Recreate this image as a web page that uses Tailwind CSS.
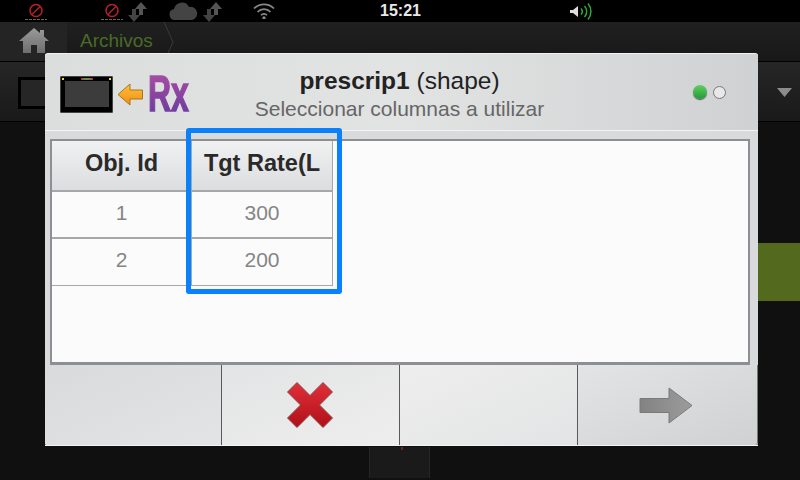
<!DOCTYPE html>
<html lang="en">
<head>
  <meta charset="UTF-8" />
  <title>Archivos</title>
  <script src="https://cdn.jsdelivr.net/npm/@tailwindcss/browser@4"></script>
</head>
<body class="relative w-[800px] h-[480px] overflow-hidden bg-[#101010] font-['Liberation_Sans',sans-serif]">

  <!-- Status bar -->
  <div class="relative h-[22px] bg-black">
    <svg class="absolute left-[24px] top-[2px]" width="24" height="19" viewBox="0 0 24 19" fill="none"><circle cx="12" cy="8.500" r="6" stroke="#b8202a" stroke-width="1.500"/><path d="M8 12.500l8-8" stroke="#b8202a" stroke-width="1.500"/><path d="M1 17.500h22" stroke="#666" stroke-dasharray="3 1"/></svg>
    <svg class="absolute left-[100px] top-[2px]" width="24" height="19" viewBox="0 0 24 19" fill="none"><circle cx="12" cy="8.500" r="6" stroke="#b8202a" stroke-width="1.500"/><path d="M8 12.500l8-8" stroke="#b8202a" stroke-width="1.500"/><path d="M1 17.500h22" stroke="#666" stroke-dasharray="3 1"/></svg>
    <svg class="absolute left-[127px] top-[2px]" width="21" height="20" viewBox="0 0 21 20" fill="#555"><path d="M14 0l6 7h-4v6h-4V7H8z"/><path d="M7 20l-6-7h4V7h4v6h4z" fill="#444"/></svg>
    <svg class="absolute left-[169px] top-[2px]" width="30" height="18" viewBox="0 0 30 18" fill="#444"><path d="M6 18a5.500 5.500 0 0 1-1-10.900A8 8 0 0 1 20 5a6.500 6.500 0 0 1 3 13z"/></svg>
    <svg class="absolute left-[202px] top-[2px]" width="21" height="20" viewBox="0 0 21 20" fill="#555"><path d="M14 0l6 7h-4v6h-4V7H8z"/><path d="M7 20l-6-7h4V7h4v6h4z" fill="#444"/></svg>
    <svg class="absolute left-[253px] top-[3px]" width="22" height="16" viewBox="0 0 22 16" fill="none" stroke="#888" stroke-width="1.700"><path d="M1 5.500a14 14 0 0 1 20 0"/><path d="M4.500 9a9 9 0 0 1 13 0"/><path d="M8 12.300a4 4 0 0 1 6 0"/><circle cx="11" cy="15" r="0.800" fill="#888"/></svg>
    <span class="absolute left-[380px] top-[2px] text-[16px] leading-[18px] font-bold text-[#e8e8e8]">15:21</span>
    <svg class="absolute left-[569px] top-[2px]" width="24" height="19" viewBox="0 0 24 19" fill="none"><path d="M1 8h3l5-4v11l-5-4H1z" fill="#ddd"/><path d="M12 6.500a4.500 4.500 0 0 1 0 6" stroke="#2fa83c" stroke-width="1.500"/><path d="M15.500 4a8 8 0 0 1 0 11" stroke="#2fa83c" stroke-width="1.500"/><path d="M19 1.500a12.500 12.500 0 0 1 0 16" stroke="#2fa83c" stroke-width="1.500"/></svg>
  </div>

  <!-- Breadcrumb bar -->
  <div class="flex h-[40px] bg-gradient-to-b from-[#202020] to-[#181818] border-b border-black">
    <div class="flex justify-center w-[67px] pt-[5px] bg-[#242424]">
      <svg width="30" height="26" viewBox="0 0 30 26"><defs><linearGradient id="homeFill" x1="0" y1="0" x2="0" y2="1"><stop offset="0" stop-color="#9a9a9a"/><stop offset="1" stop-color="#6e6e6e"/></linearGradient></defs><path d="M15 1L0 14h4v12h8v-8h6v8h8V14h4l-5-4.500V3h-4v3z" fill="url(#homeFill)"/></svg>
    </div>
    <div class="relative w-[107px] pl-[13px] pt-[8px] text-[19px] leading-[22px] text-[#4a6b25]">
      Archivos
      <svg class="absolute right-0 top-0" width="11" height="40" viewBox="0 0 11 40" fill="none"><path d="M1 0l9 20-9 20" stroke="#3a3a3a"/></svg>
    </div>
  </div>

  <!-- Toolbar behind the dialog -->
  <div class="relative h-[60px] bg-gradient-to-b from-[#262626] to-[#1a1a1a] border-b border-black">
    <div class="absolute left-[18px] top-[15px] w-[40px] h-[32px] bg-[#262626] border-[3px] border-black"></div>
    <svg class="absolute left-[777px] top-[26px]" width="15" height="9" viewBox="0 0 15 9" fill="#8c8c8c"><path d="M0 0h15l-7.500 9z"/></svg>
  </div>

  <!-- Content behind the dialog -->
  <div class="absolute right-0 top-[243px] w-[42px] h-[58px] bg-[#53691d]"></div>
  <div class="absolute left-[369px] top-[447px] w-[61px] h-[31px] bg-[#1a1a1a] border-x border-[#262626]">
    <div class="ml-[31px] w-[2px] h-[3px] bg-[#6b2a20]"></div>
  </div>

  <!-- Dialog -->
  <div class="absolute left-[45px] top-[53px] flex flex-col w-[713px] h-[393px] bg-[#d9dadb] rounded-[3px] border-t border-[#f2f2f2]">
    <div class="relative flex flex-col items-center h-[77px] pt-[12px] pr-[4px] bg-gradient-to-r from-[#dcdddd] via-[#e2e3e3] to-[#d0d1d2] border-b border-[#f4f4f4]">
      <div class="absolute left-[15px] top-[18px] flex items-center">
        <div class="relative w-[53px] h-[37px] bg-black border border-[#444] rounded-[1px]">
          <div class="absolute left-[4px] top-[4px] w-[44px] h-[26px] bg-[#3c3c3c]"></div>
          <div class="absolute left-[1px] top-[1px] w-[2px] h-[2px] bg-[#e8d84a]"></div>
          <div class="absolute right-[1px] top-[1px] w-[2px] h-[2px] bg-[#e8d84a]"></div>
          <div class="absolute left-[20px] top-[1px] w-[12px] h-[2px] bg-gradient-to-r from-[#a8323a] via-[#4e9a4e] to-[#a8323a]"></div>
        </div>
        <svg class="ml-[4px]" width="27" height="25" viewBox="0 0 27 25"><defs><linearGradient id="arrowFill" x1="0" y1="0" x2="0" y2="1"><stop offset="0" stop-color="#ffc23d"/><stop offset="1" stop-color="#f28c12"/></linearGradient></defs><path d="M1 12.500L13 2v6h12.500v9H13v6z" fill="url(#arrowFill)" stroke="#a9751d"/></svg>
        <div class="ml-[4px] w-[41px] h-[44px]">
          <span class="block w-[66px] origin-left scale-x-[0.64] bg-gradient-to-b from-[#a94da3] to-[#6a3a9e] bg-clip-text text-transparent [-webkit-text-stroke:1.5px_transparent] text-[50px] leading-[44px] font-bold">Rx</span>
        </div>
      </div>
      <p class="text-[24.500px] leading-[29px] text-[#222]"><span class="font-bold">prescrip1</span> (shape)</p>
      <p class="text-[21px] leading-[27px] text-[#666]">Seleccionar columnas a utilizar</p>
      <div class="absolute left-[648px] top-[31px] flex items-center gap-[6px]">
        <span class="w-[14px] h-[14px] rounded-full bg-gradient-to-b from-[#5fd05f] to-[#1f9a3a] shadow-[0_1px_1px_#555]"></span>
        <span class="w-[13px] h-[13px] rounded-full bg-[#e8e8e8] border border-[#777]"></span>
      </div>
    </div>

    <!-- Table panel -->
    <div class="flex-1 pl-[5px] pt-[8px] pr-[8px]">
      <div class="h-full bg-[#fbfbfb] border-2 border-[#8e8f92] border-b-[3px]">
        <div class="grid grid-cols-[140px_141px] text-center">
          <div class="flex items-center justify-center h-[51px] pb-[4px] bg-gradient-to-b from-[#f0f1f1] to-[#dcdddf] border-r border-b-2 border-[#a6a7a9] text-[23.500px] font-bold text-[#2a2a2a]">Obj. Id</div>
          <div class="flex items-center justify-center h-[51px] pb-[4px] bg-gradient-to-b from-[#f0f1f1] to-[#dcdddf] border-r border-b-2 border-[#a6a7a9] text-[23.500px] font-bold text-[#2a2a2a]">Tgt Rate(L</div>
          <div class="flex items-center justify-center h-[47px] pb-[4px] border-r border-b-2 border-[#a6a7a9] text-[21px] text-[#858585]">1</div>
          <div class="flex items-center justify-center h-[47px] pb-[4px] border-r border-b-2 border-[#a6a7a9] text-[21px] text-[#858585]">300</div>
          <div class="flex items-center justify-center h-[47px] pb-[4px] border-r border-b border-[#a6a7a9] text-[21px] text-[#858585]">2</div>
          <div class="flex items-center justify-center h-[47px] pb-[4px] border-r border-b border-[#a6a7a9] text-[21px] text-[#858585]">200</div>
        </div>
      </div>
    </div>

    <!-- Footer buttons -->
    <div class="grid grid-cols-[177px_178px_178px_180px] h-[81px] border-b border-[#f4f4f4]">
      <div class="bg-gradient-to-br from-[#d9dadb] to-[#e3e4e5] border-r border-[#5a5a5a] rounded-bl-[3px]"></div>
      <div class="flex items-center justify-center pr-[2px] bg-gradient-to-br from-[#e3e4e5] to-[#eeeeee] border-r border-[#5a5a5a]">
        <svg width="48" height="48" viewBox="0 0 48 48"><defs><linearGradient id="xFill" x1="0" y1="0" x2="0" y2="1"><stop offset="0" stop-color="#e0303a"/><stop offset="1" stop-color="#b01018"/></linearGradient></defs><path d="M11 1.500L24 14.500 37 1.500 46.500 11 33.500 24 46.500 37 37 46.500 24 33.500 11 46.500 1.500 37 14.500 24 1.500 11z" fill="url(#xFill)" stroke="#8a4a4c" stroke-linejoin="round"/></svg>
      </div>
      <div class="bg-gradient-to-br from-[#eeeeee] to-[#e3e4e5] border-r border-[#5a5a5a]"></div>
      <div class="flex items-center justify-center pr-[3px] bg-gradient-to-br from-[#e3e4e5] to-[#d0d1d2] border-r border-[#777] rounded-br-[3px]">
        <svg width="54" height="37" viewBox="0 0 54 37"><defs><linearGradient id="nextFill" x1="0" y1="0" x2="1" y2="0"><stop offset="0" stop-color="#828282"/><stop offset="1" stop-color="#9c9c9c"/></linearGradient></defs><path d="M1 11.500h29V1l23 17.500L30 36V25.500H1z" fill="url(#nextFill)" stroke="#7a7a7a" stroke-linejoin="round"/></svg>
      </div>
    </div>
  </div>

  <!-- Blue highlight around the second column -->
  <div class="absolute left-[186px] top-[128px] w-[156px] h-[166px] border-[5px] border-[#0a80fa] rounded-[3px]"></div>
</body>
</html>
